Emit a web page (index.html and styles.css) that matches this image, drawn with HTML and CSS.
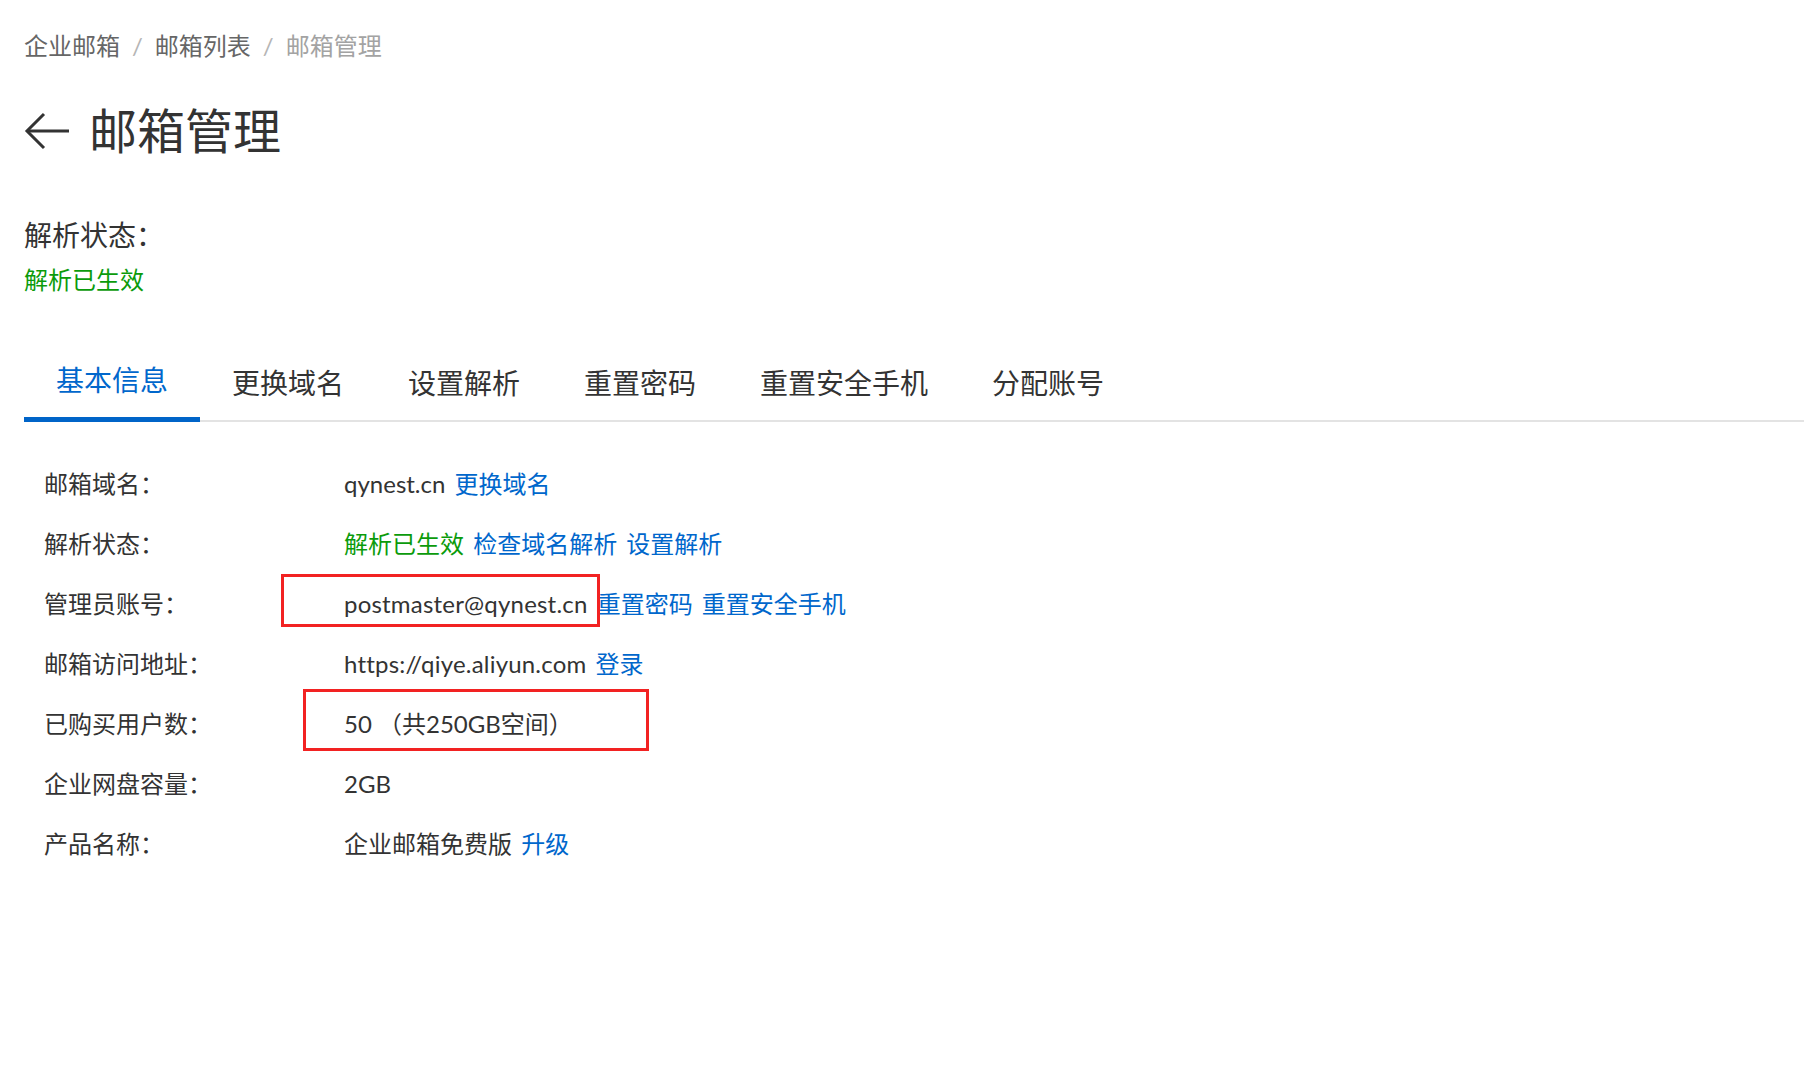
FILE: index.html
```html
<!DOCTYPE html>
<html lang="zh-CN">

<head>
    <meta charset="UTF-8">
    <meta name="viewport" content="width=device-width, initial-scale=1.0">
    <title>邮箱管理</title>
    <link rel="stylesheet" href="styles.css">
</head>

<body>
    <div class="page">
        <!-- Breadcrumb -->
        <nav class="breadcrumb">
            <a href="#">企业邮箱</a>
            <span class="sep">/</span>
            <a href="#">邮箱列表</a>
            <span class="sep">/</span>
            <span class="current">邮箱管理</span>
        </nav>

        <div class="title-row">
            <a href="#" class="back" aria-label="返回">
                <svg width="46" height="40" viewBox="0 0 46 40" fill="none" stroke="#333" stroke-width="3">
                    <path d="M45 20H3" />
                    <path d="M20 3L3 20L20 37" />
                </svg>
            </a>
            <h1>邮箱管理</h1>
        </div>

        <div class="status">
            <div class="status-label">解析状态：</div>
            <div class="status-value">解析已生效</div>
        </div>

        <ul class="tabs">
            <li class="tab active">基本信息</li>
            <li class="tab">更换域名</li>
            <li class="tab">设置解析</li>
            <li class="tab">重置密码</li>
            <li class="tab">重置安全手机</li>
            <li class="tab">分配账号</li>
        </ul>

        <div class="info">
            <div class="row">
                <div class="label">邮箱域名：</div>
                <div class="value">qynest.cn <a href="#">更换域名</a></div>
            </div>
            <div class="row">
                <div class="label">解析状态：</div>
                <div class="value"><span class="ok">解析已生效</span> <a href="#">检查域名解析</a> <a href="#">设置解析</a></div>
            </div>
            <div class="row">
                <div class="label">管理员账号：</div>
                <div class="value"><span class="latin">postmaster@qynest.cn</span> <a href="#">重置密码</a> <a href="#">重置安全手机</a></div>
                <!-- annotation box -->
                <div class="mark mark-admin"></div>
            </div>
            <div class="row">
                <div class="label">邮箱访问地址：</div>
                <div class="value"><span class="latin">https://qiye.aliyun.com</span> <a href="#">登录</a></div>
            </div>
            <div class="row">
                <div class="label">已购买用户数：</div>
                <div class="value">50 （共250GB空间）</div>
                <div class="mark mark-users"></div>
            </div>
            <div class="row">
                <div class="label">企业网盘容量：</div>
                <div class="value">2GB</div>
            </div>
            <div class="row">
                <div class="label">产品名称：</div>
                <div class="value">企业邮箱免费版 <a href="#">升级</a></div>
            </div>
        </div>
    </div>
</body>

</html>
```

FILE: styles.css
```css
body {
    margin: 0;
    background: #fff;
    color: #333;
    font-family: "Lato", "Noto Sans CJK SC", sans-serif;
}

a {
    color: #0067cc;
    text-decoration: none;
}

.page {
    padding-left: 24px;
}

/* breadcrumb */
.breadcrumb {
    display: flex;
    align-items: center;
    padding-top: 30px;
    font-size: 24px;
    line-height: 32px;
}

.breadcrumb a {
    color: #666;
}

.breadcrumb .sep {
    padding: 0 12px;
    color: #b5b5b5;
}

.breadcrumb .current {
    color: #a3a3a3;
}

/* title */
.title-row {
    display: flex;
    align-items: center;
    margin-top: 41px;
}

.back {
    display: flex;
    margin-right: 19px;
}

.title-row h1 {
    margin: 0;
    font-size: 48px;
    line-height: 56px;
    font-weight: normal;
    color: #333;
}

/* status */
.status {
    margin-top: 58px;
}

.status-label {
    font-size: 28px;
    line-height: 36px;
}

.status-value {
    margin-top: 11px;
    font-size: 24px;
    line-height: 32px;
    color: #0b9b0b;
}

/* tabs */
.tabs {
    display: flex;
    margin: 44px 0 0;
    padding: 0;
    list-style: none;
    border-bottom: 2px solid #e3e3e3;
}

.tab {
    padding: 25px 32px 16px;
    margin-bottom: -2px;
    font-size: 28px;
    line-height: 36px;
    color: #333;
    border-bottom: 5px solid transparent;
}

.tab.active {
    padding-top: 22px;
    padding-bottom: 19px;
    color: #0067cc;
    border-bottom-color: #0064c8;
}

/* info rows */
.info {
    margin-top: 32px;
    padding-left: 20px;
}

.row {
    position: relative;
    display: flex;
    align-items: center;
    height: 60px;
    font-size: 24px;
    line-height: 32px;
}

.label {
    width: 300px;
    flex-shrink: 0;
}

.value {
    white-space: pre;
}

.value a {
    margin-left: 3px;
}

.latin {
    letter-spacing: 0.2px;
}

.ok {
    color: #0b9b0b;
}

.mark {
    position: absolute;
    box-sizing: border-box;
    border: 3px solid #f22222;
}

.mark-admin {
    left: 237px;
    top: 0;
    width: 319px;
    height: 53px;
}

.mark-users {
    left: 259px;
    top: -5px;
    width: 346px;
    height: 62px;
}
```
